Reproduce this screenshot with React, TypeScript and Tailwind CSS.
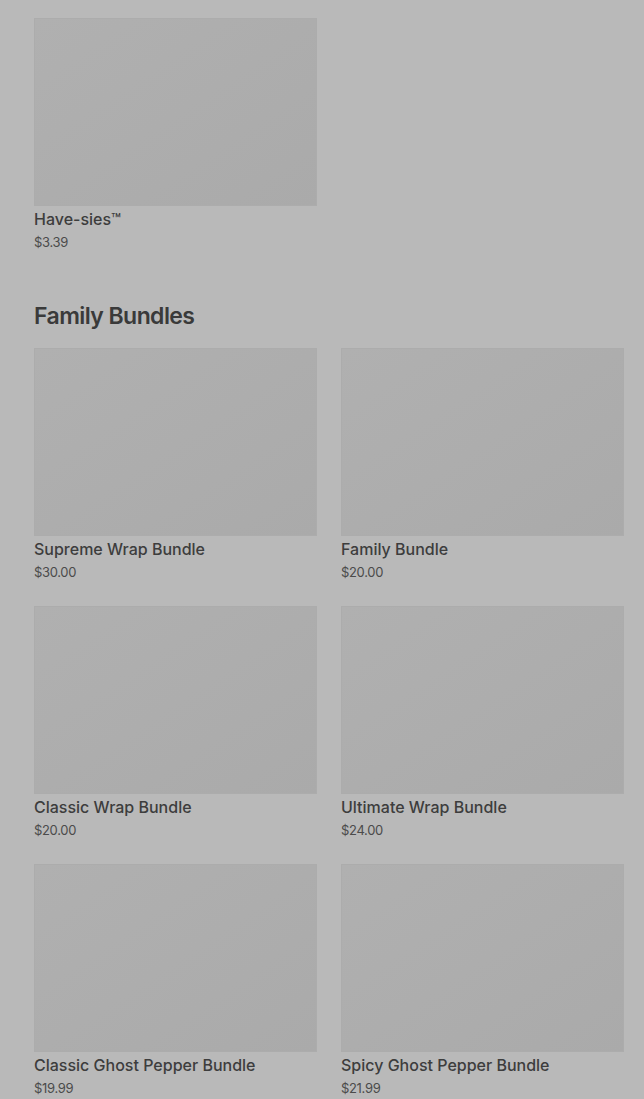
const bundles = [
  { name: "Supreme Wrap Bundle", price: "$30.00" },
  { name: "Family Bundle", price: "$20.00" },
  { name: "Classic Wrap Bundle", price: "$20.00" },
  { name: "Ultimate Wrap Bundle", price: "$24.00" },
  { name: "Classic Ghost Pepper Bundle", price: "$19.99" },
  { name: "Spicy Ghost Pepper Bundle", price: "$21.99" },
];

function Item({ name, price }: { name: string; price: string }) {
  return (
    <div className="flex flex-col w-[283px]">
      <div className="h-[188px] w-full bg-gradient-to-br from-[#b0b0b0] to-[#aaaaaa] border border-[#acacac]" />
      <div className="mt-px text-[16px] leading-6 font-medium text-[#3d3d3d]">{name}</div>
      <div className="pt-px text-[13px] leading-5 text-[#4b4b4b] tracking-tight">{price}</div>
    </div>
  );
}

export default function App() {
  return (
    <div
      className="min-h-[1099px] w-[644px] overflow-hidden bg-[#b9b9b9] pl-[34px] pt-[18px]"
      style={{ fontFamily: "Inter, 'Noto Sans', sans-serif" }}
    >
      <Item name="Have-sies™" price="$3.39" />
      <h2 className="mt-[48px] text-[23px] leading-8 font-semibold tracking-tight text-[#3a3a3a]">
        Family Bundles
      </h2>
      <div className="mt-[16px] grid grid-cols-[283px_283px] gap-x-6 gap-y-6">
        {bundles.map((b) => (
          <Item key={b.name} name={b.name} price={b.price} />
        ))}
      </div>
    </div>
  );
}
